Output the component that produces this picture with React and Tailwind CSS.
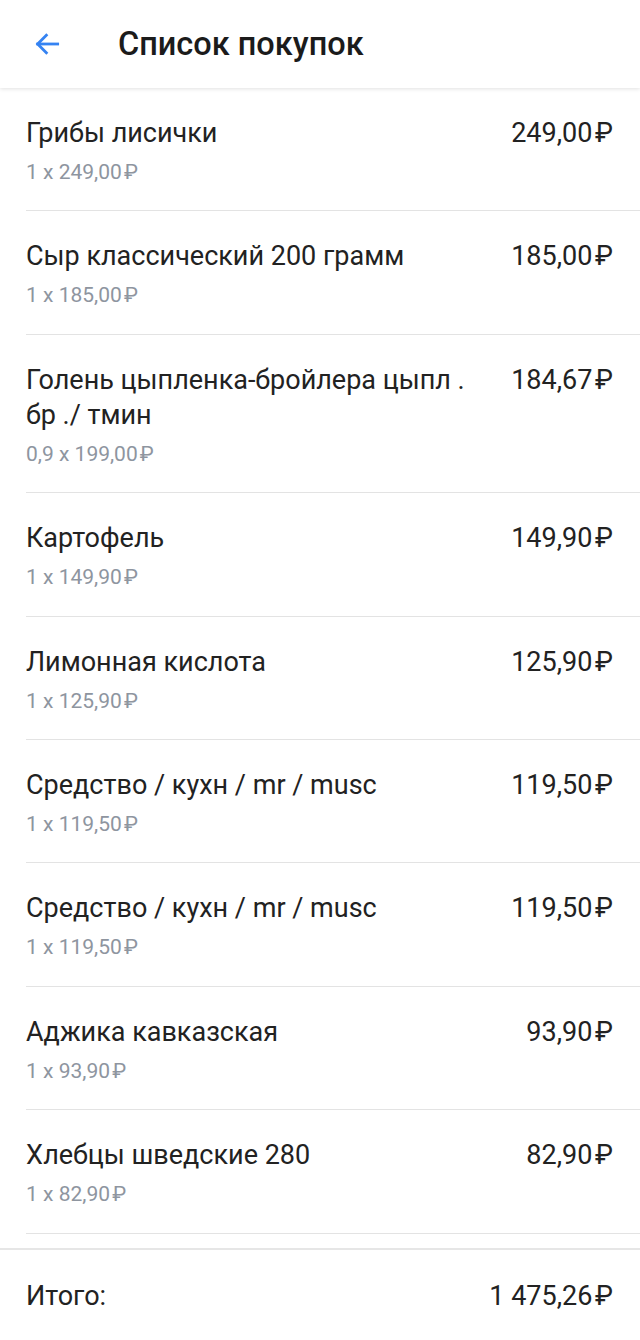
import React from "react";

const ITEMS = [
  { name: "Грибы лисички", qty: "1 x 249,00", total: "249,00" },
  { name: "Сыр классический 200 грамм", qty: "1 x 185,00", total: "185,00" },
  {
    name: "Голень цыпленка-бройлера цыпл . бр ./ тмин",
    qty: "0,9 x 199,00",
    total: "184,67",
  },
  { name: "Картофель", qty: "1 x 149,90", total: "149,90" },
  { name: "Лимонная кислота", qty: "1 x 125,90", total: "125,90" },
  { name: "Средство / кухн / mr / musc", qty: "1 x 119,50", total: "119,50" },
  { name: "Средство / кухн / mr / musc", qty: "1 x 119,50", total: "119,50" },
  { name: "Аджика кавказская", qty: "1 x 93,90", total: "93,90" },
  { name: "Хлебцы шведские 280", qty: "1 x 82,90", total: "82,90" },
];

const RUB = "\u200a₽";

export default function App() {
  return (
    <div className="min-h-[1340px] bg-white font-['Roboto',sans-serif] text-[#202124]">
      {/* Header */}
      <header className="h-[88px] flex items-center bg-white shadow-[0_1px_4px_rgba(0,0,0,0.12)] relative z-10">
        <button className="w-[92px] h-full flex items-center pl-[31px]" aria-label="Назад">
          <svg width="32" height="32" viewBox="0 0 24 24" fill="none" stroke="#3583f2" strokeWidth="2.1" strokeLinecap="square">
            <path d="M20 12H5" />
            <path d="M11.5 5.5L5 12l6.5 6.5" />
          </svg>
        </button>
        <h1 className="ml-[26px] text-[32.5px] font-medium text-[#1b1b1b]">
          Список покупок
        </h1>
      </header>

      {/* Items */}
      <ul>
        {ITEMS.map((it, i) => (
          <li key={i} className="pl-[26px]">
            <div className="flex items-start pr-[27px] pt-[28px] pb-[25.4px] border-b border-[#e3e3e3]">
              <div className="flex-1 min-w-0 pr-[24px]">
                <div className="text-[27px] leading-[35px] text-[#222]">{it.name}</div>
                <div className="mt-[8px] text-[21px] leading-[26px] text-[#8e959f]">
                  {it.qty}
                  {RUB}
                </div>
              </div>
              <div className="shrink-0 text-[27px] leading-[35px] text-[#222]">
                {it.total}
                {RUB}
              </div>
            </div>
          </li>
        ))}
      </ul>

      {/* Total */}
      <div className="mt-[14px] border-t-2 border-[#e6e6e6] flex items-center justify-between pl-[26px] pr-[27px] pt-[29px] pb-[30px]">
        <span className="text-[27px] leading-[35px] text-[#222]">Итого:</span>
        <span className="text-[27px] leading-[35px] text-[#222]">1 475,26{RUB}</span>
      </div>
    </div>
  );
}
